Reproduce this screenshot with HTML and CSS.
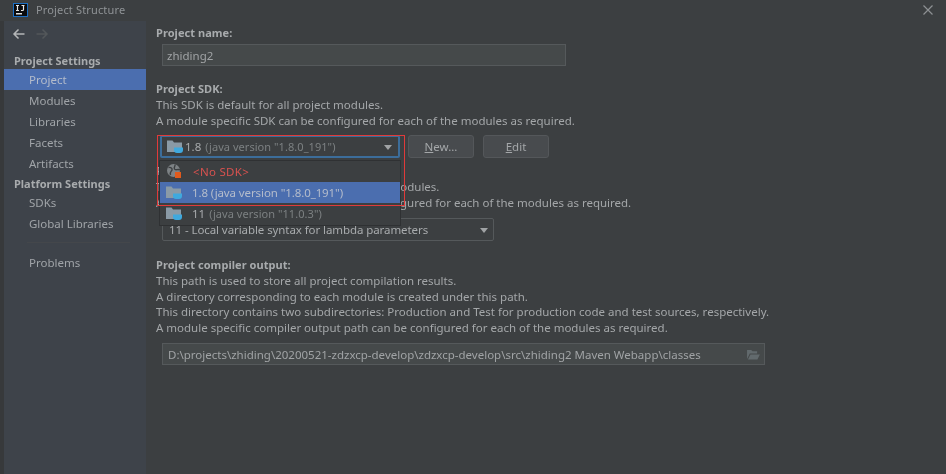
FILE: index.html
```html
<!DOCTYPE html>
<html lang="en">
<head>
<meta charset="utf-8">
<title>Project Structure</title>
<link rel="stylesheet" href="styles.css">
</head>
<body>
<div class="window">
  <header class="titlebar">
    <svg class="logo" width="15" height="14" viewBox="0 0 15 14"><rect width="15" height="14" fill="#1c6fc4"/><rect x="1" y="1" width="13" height="12" fill="#0b0b0d"/><rect x="3" y="10" width="6" height="1.500" fill="#ddd"/><path d="M3 2.500h3M4.500 2.500v5M3 7.500h3M8.500 2.500h3M10.500 2.500v4a1 1 0 0 1-1 1H8" fill="none" stroke="#e8e8e8" stroke-width="1.200"/></svg>
    <span class="title">Project Structure</span>
    <svg class="close" width="10" height="10" viewBox="0 0 10 10"><path d="M.5.500l9 9M9.500.500l-9 9" stroke="#8d9093" stroke-width="1.200"/></svg>
  </header>
  <div class="body">
    <nav class="sidebar">
      <div class="arrows">
        <svg width="13" height="12" viewBox="0 0 13 12"><path d="M12.500 6H2M6.500 1.500L2 6l4.500 4.500" fill="none" stroke="#b4b6b8" stroke-width="1.500"/></svg>
        <svg width="13" height="12" viewBox="0 0 13 12"><path d="M.5 6H11M6.500 1.500L11 6l-4.500 4.500" fill="none" stroke="#53575a" stroke-width="1.500"/></svg>
      </div>
      <div class="nav-head">Project Settings</div>
      <a class="nav-item active">Project</a>
      <a class="nav-item">Modules</a>
      <a class="nav-item">Libraries</a>
      <a class="nav-item">Facets</a>
      <a class="nav-item">Artifacts</a>
      <div class="nav-head second">Platform Settings</div>
      <a class="nav-item">SDKs</a>
      <a class="nav-item">Global Libraries</a>
      <div class="nav-sep"></div>
      <a class="nav-item">Problems</a>
    </nav>
    <main class="main">
      <h2 class="label first">Project name:</h2>
      <div class="field name-field">zhiding2</div>

      <h2 class="label sdk-label">Project SDK:</h2>
      <p class="line">This SDK is default for all project modules.</p>
      <p class="line">A module specific SDK can be configured for each of the modules as required.</p>

      <div class="sdk-row">
        <div class="combo sdk-combo">
          <svg class="folder" width="18" height="15" viewBox="0 0 18 15"><use href="#sdk-folder"/></svg>
          <span class="ver">1.8</span><span class="dim">(java version "1.8.0_191")</span>
          <span class="caret"></span>
        </div>
        <button class="btn new-btn"><u>N</u>ew...</button>
        <button class="btn edit-btn"><u>E</u>dit</button>
      </div>

      <h2 class="label level-label">Project language level:</h2>
      <p class="line">This language level is default for all project modules.</p>
      <p class="line">A module specific language level can be configured for each of the modules as required.</p>
      <div class="combo level-combo">
        <span>11 - Local variable syntax for lambda parameters</span>
        <span class="caret"></span>
      </div>

      <h2 class="label output-label">Project compiler output:</h2>
      <p class="line">This path is used to store all project compilation results.</p>
      <p class="line">A directory corresponding to each module is created under this path.</p>
      <p class="line">This directory contains two subdirectories: Production and Test for production code and test sources, respectively.</p>
      <p class="line">A module specific compiler output path can be configured for each of the modules as required.</p>
      <div class="field output-field">
        <span>D:\projects\zhiding\20200521-zdzxcp-develop\zdzxcp-develop\src\zhiding2 Maven Webapp\classes</span>
        <svg width="14" height="11" viewBox="0 0 15 12"><path d="M1 11V1h4.500l1.500 1.500h5V5H4L1 11zM2 11.500L4.700 6H15l-2.700 5.500z" fill="#626a6d"/></svg>
      </div>
    </main>
  </div>

  <ul class="popup">
    <li class="opt">
      <svg class="folder" width="18" height="17" viewBox="0 0 18 17"><circle cx="7.500" cy="7.500" r="6.500" fill="#7d8285"/><path d="M2.500 4.500c2.500-.5 4 1 3.500 2.500S3.500 8.500 4.500 12M9 1.500c.5 2-1.500 2.500-.5 4.500s3.500-.5 5.500 1" fill="none" stroke="#3c3f41" stroke-width="1.400"/><rect x="9" y="9" width="6" height="6" fill="#e05a1c"/></svg>
      <span class="nosdk">&lt;No SDK&gt;</span>
    </li>
    <li class="opt selected">
      <svg class="folder" width="18" height="15" viewBox="0 0 18 15"><use href="#sdk-folder"/></svg>
      <span class="sel-text">1.8 (java version "1.8.0_191")</span>
    </li>
    <li class="opt">
      <svg class="folder" width="18" height="15" viewBox="0 0 18 15"><use href="#sdk-folder"/></svg>
      <span class="ver">11</span><span class="dim">(java version "11.0.3")</span>
    </li>
  </ul>
  <div class="annotation"></div>
</div>
<svg class="defs" width="0" height="0"><defs><g id="sdk-folder"><path d="M0 1.500h5.500L7 3.500h8V13H0z" fill="#8a9aa6"/><path d="M7 8.500h9v2.500a3 3 0 0 1-3 3h-3a3 3 0 0 1-3-3z" fill="#3fa9de"/></g></defs></svg>
</body>
</html>
```

FILE: styles.css
```css
* { box-sizing: border-box; }
html, body { margin: 0; padding: 0; }
body {
  width: 946px;
  height: 474px;
  overflow: hidden;
  background: #3c3f41;
  font-family: "Noto Sans", "Open Sans", sans-serif;
  font-size: 11.500px;
  color: #a8abad;
}
.window { position: relative; width: 946px; height: 474px; display: flex; flex-direction: column; filter: blur(.35px); }
.titlebar { height: 21px; display: flex; align-items: center; padding: 0 13px 2px 13px; background: #3c3f41; }
.logo { flex: none; }
.title { margin-left: 8px; color: #8f9396; font-size: 11px; letter-spacing: .15px; }
.close { margin-left: auto; }
.body { flex: 1; display: flex; min-height: 0; padding-left: 4px; background: #37393b; }
.sidebar { width: 142px; flex: none; background: #3e434a; display: flex; flex-direction: column; }
.arrows { height: 26px; display: flex; align-items: center; gap: 11px; padding: 0 0 0 8px; }
.nav-head { height: 17px; line-height: 17px; padding-left: 10px; font-size: 11px; font-weight: 700; color: #a8abad; margin-top: 5px; }
.nav-head.second { height: 16px; line-height: 16px; margin-top: 2px; }
.nav-item { display: block; height: 21px; line-height: 22px; padding-left: 25px; color: #a0a4a8; }
.nav-item.active { background: #4b6eaf; color: #b4bccb; }
.nav-sep { height: 1px; margin: 8px 16px 9px 23px; background: #44474b; }
.main { flex: 1; padding: 0 0 0 10px; min-width: 0; position: relative; background: #3c3f41; }
.label { margin: 0; font-size: 11px; font-weight: 700; height: 17px; line-height: 17px; color: #a8abad; letter-spacing: .05px; }
.first { margin-top: 3px; }
.line { margin: 0; height: 15.500px; line-height: 15.500px; white-space: nowrap; color: #a4a7a9; }
.field { background: #45494a; border: 1px solid #55595b; color: #a0a3a5; padding-left: 4px; display: flex; align-items: center; margin-left: 6px; }
.name-field { width: 404px; height: 22px; margin-top: 3px; }
.sdk-label { margin-top: 14px; }
.sdk-row { display: flex; align-items: flex-start; margin-top: 7px; margin-left: 4px; }
.combo { display: flex; align-items: center; position: relative; }
.sdk-combo { width: 240px; height: 23px; background: #3c3f41; border: 2px solid #3c6d9a; border-radius: 2px; padding-left: 5px; }
.sdk-combo .folder { flex: none; }
.ver { color: #a8abad; margin-right: 4px; }
.dim { color: #7c8082; font-size: 11px; letter-spacing: .05px; }
.caret { position: absolute; right: 6px; top: 50%; margin-top: -2px; border: 4.500px solid transparent; border-top: 5px solid #a0a3a5; border-bottom: 0; }
.btn { font: inherit; color: #a4a7a9; width: 66px; height: 23px; background: #484b4e; border: 1px solid #54575a; border-radius: 3px; padding: 0; margin: 0; }
.new-btn { margin-left: 8px; }
.edit-btn { margin-left: 9px; }
.level-label { margin-top: 4px; }
.level-combo { width: 332px; height: 23px; margin: 8px 0 0 6px; border: 1px solid #55595b; border-radius: 2px; padding-left: 6px; letter-spacing: -.08px; }
.level-combo .caret { right: 5px; }
.output-label { margin-top: 16px; height: 16px; line-height: 16px; }
.output-field { width: 603px; height: 22px; margin-top: 8px; padding: 0 4px 0 5px; justify-content: space-between; }
.popup { position: absolute; left: 159px; top: 160px; width: 242px; height: 66px; margin: 0; padding: 0; list-style: none; background: #3c3f41; border: 1px solid #2f3133; }
.opt { height: 21px; display: flex; align-items: center; padding-left: 6px; }
.opt .folder { margin-right: 8px; flex: none; width: 18px; }
.opt.selected { background: #4b6eaf; color: #b4bccb; }
.sel-text { letter-spacing: -.1px; }
.nosdk { color: #d8524f; margin-left: 1px; letter-spacing: .3px; }
.annotation { position: absolute; left: 157px; top: 135px; width: 248px; height: 71px; border: 1px solid #e03a3a; pointer-events: none; }
.defs { position: absolute; }
```
